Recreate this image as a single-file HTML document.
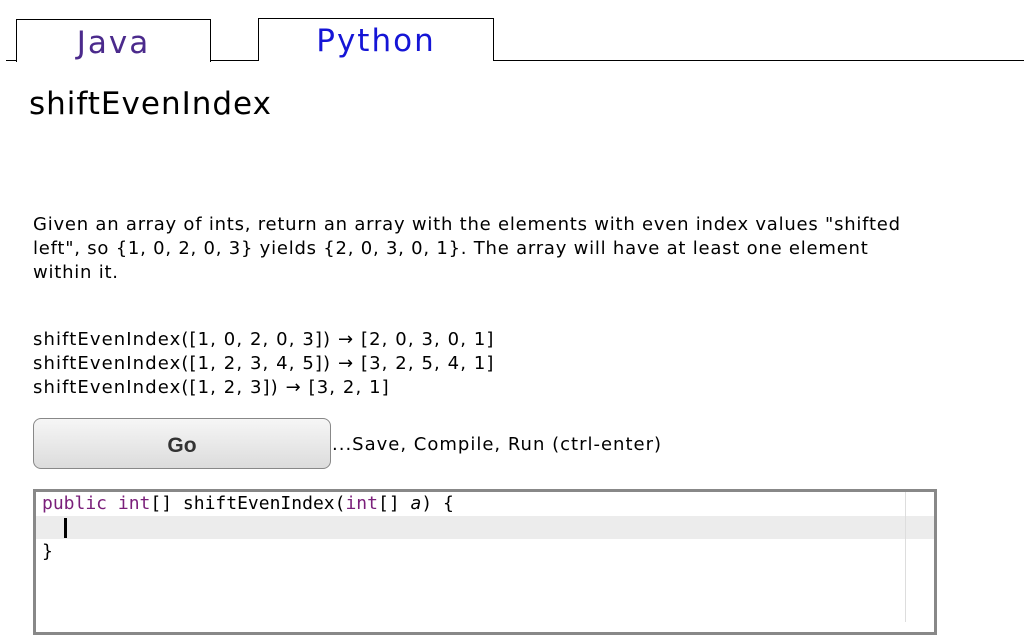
<!DOCTYPE html>
<html><head><style>
body{margin:0;width:1024px;height:621px;overflow:hidden;background:#fff;font-family:"DejaVu Sans",Verdana,sans-serif;color:#000;position:relative}
.a{position:absolute}
.tab{position:absolute;border:1px solid #000;border-bottom:none;background:#fff;text-align:center;font-size:31px;line-height:46px;letter-spacing:2px}
</style></head><body>
<div class="a" style="left:6px;top:60px;width:1018px;height:1px;background:#000"></div>
<div class="tab" style="left:16px;top:19px;width:193px;height:42px;color:#4b2a8c">Java</div>
<div class="tab" style="left:258px;top:18px;width:234px;height:42px;color:#1515d6;line-height:44px">Python</div>
<div class="a" style="left:29px;top:86px;font-size:31px;letter-spacing:1px">shiftEvenIndex</div>
<div class="a" style="left:33px;top:213px;width:900px;font-size:18px;line-height:24px;letter-spacing:0.77px">Given an array of ints, return an array with the elements with even index values "shifted left", so {1, 0, 2, 0, 3} yields {2, 0, 3, 0, 1}. The array will have at least one element within it.</div>
<div class="a" style="left:33px;top:328px;font-size:18px;line-height:24px;letter-spacing:1.1px">shiftEvenIndex([1, 0, 2, 0, 3]) → [2, 0, 3, 0, 1]<br>shiftEvenIndex([1, 2, 3, 4, 5]) → [3, 2, 5, 4, 1]<br>shiftEvenIndex([1, 2, 3]) → [3, 2, 1]</div>
<div class="a" style="left:33px;top:418px;width:296px;height:49px;border:1px solid #888;border-radius:8px;background:linear-gradient(#f6f6f6,#dcdcdc);text-align:center;font:bold 21px/53px 'Liberation Sans',Arial,sans-serif;color:#333">Go</div>
<div class="a" style="left:332px;top:434px;font-size:18px;letter-spacing:1px">...Save, Compile, Run (ctrl-enter)</div>
<div class="a" style="left:33px;top:489px;width:898px;height:140px;border:3px solid #888;background:#fff"></div>
<div class="a" style="left:36px;top:516px;width:898px;height:23px;background:#ececec"></div>
<div class="a" style="left:905px;top:492px;width:1px;height:130px;background:#ddd"></div>
<div class="a" style="left:64px;top:518px;width:3px;height:20px;background:#000"></div>
<div class="a" style="left:42px;top:492px;font:18px/24px 'DejaVu Sans Mono',monospace;white-space:pre"><span style="color:#7a1f7a">public</span> <span style="color:#7a1f7a">int</span>[] shiftEvenIndex(<span style="color:#7a1f7a">int</span>[] <i>a</i>) {

}</div>
</body></html>
